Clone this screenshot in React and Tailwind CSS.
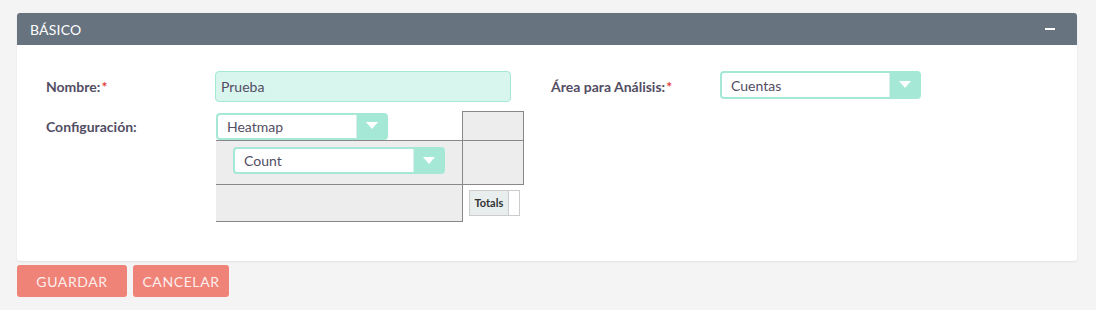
import React from "react";

function Arrow() {
  return (
    <svg width="12" height="8" viewBox="0 0 12 8">
      <path d="M0 0 L12 0 L6 7 Z" fill="#ffffff" />
    </svg>
  );
}

function Select({ value, className }) {
  return (
    <div className={"flex rounded-[4px] border-2 border-[#a5e8d6] bg-[#a5e8d6] " + className}>
      <div className="flex-1 bg-white rounded-l-[2px] flex items-center pl-[9px] text-[14px] text-[#534d64] border-r border-[#d9efe9]">
        {value}
      </div>
      <div className="w-[29px] flex items-center justify-center">
        <Arrow />
      </div>
    </div>
  );
}

export default function App() {
  return (
    <div
      className="w-[1096px] h-[310px] bg-[#f4f4f4] pt-[13px] pl-[17px] pr-[19px]"
      style={{ fontFamily: "Lato, 'Open Sans', sans-serif" }}
    >
      <div className="rounded-[3px] bg-white shadow-[0_1px_2px_rgba(0,0,0,0.08)]">
        <div className="h-[32px] bg-[#67737f] rounded-t-[3px] flex items-center justify-between pl-[13px] pr-[22px]">
          <span className="text-white text-[14px] tracking-[0.2px]">BÁSICO</span>
          <span className="w-[10px] h-[2px] bg-white" />
        </div>
        <div className="pl-[29px] pt-[26px] pb-[39px]">
          <div className="flex items-start">
            <div className="w-[169px] h-[31px] flex items-center text-[14px] font-bold text-[#534d64]">
              Nombre:<span className="text-[#e23d3d] ml-[1px]">*</span>
            </div>
            <div className="w-[296px] h-[31px] rounded-[4px] bg-[#d8f5ee] border border-[#a5e8d6] flex items-center pl-[5px] text-[14px] text-[#534d64]">
              Prueba
            </div>
            <div className="ml-[40px] w-[169px] h-[30px] flex items-center text-[14px] font-bold text-[#534d64]">
              Área para Análisis:<span className="text-[#e23d3d] ml-[1px]">*</span>
            </div>
            <Select value="Cuentas" className="w-[201px] h-[28px]" />
          </div>
          <div className="flex items-start mt-[8px]">
            <div className="w-[170px] h-[33px] flex items-center text-[14px] font-bold text-[#534d64]">
              Configuración:
            </div>
            <table className="border-collapse mt-[1px]">
              <tbody>
                <tr>
                  <td className="w-[246px] h-[29px] p-0 align-top pt-[1px]">
                    <Select value="Heatmap" className="w-[172px] h-[27px]" />
                  </td>
                  <td className="w-[61px] p-0 bg-[#ededed] border border-[#888888]" />
                </tr>
                <tr>
                  <td className="h-[44px] p-0 bg-[#ededed] border-t border-b border-r border-[#888888] pl-[17px] pt-[6px] align-top">
                    <Select value="Count" className="w-[212px] h-[27px]" />
                  </td>
                  <td className="p-0 bg-[#ededed] border border-[#888888]" />
                </tr>
                <tr>
                  <td className="h-[37px] p-0 bg-[#ededed] border-b border-r border-[#888888]" />
                  <td className="p-0 pl-[6px] pt-[5px] align-top bg-white">
                    <div className="flex h-[26px] w-[51px] border border-[#cccccc]">
                      <div className="bg-[#e8eeee] border-r border-[#cccccc] flex items-center px-[5px] text-[11px] font-bold text-[#333333]">
                        Totals
                      </div>
                      <div className="flex-1 bg-white" />
                    </div>
                  </td>
                </tr>
              </tbody>
            </table>
          </div>
        </div>
      </div>
      <div className="flex gap-[6px] mt-[4px]">
        <button className="w-[110px] h-[32px] rounded-[3px] bg-[#f08377] text-[#fdeeee] text-[14px] tracking-[0.6px]">
          GUARDAR
        </button>
        <button className="w-[96px] h-[32px] rounded-[3px] bg-[#f08377] text-[#fdeeee] text-[14px] tracking-[0.6px]">
          CANCELAR
        </button>
      </div>
    </div>
  );
}
